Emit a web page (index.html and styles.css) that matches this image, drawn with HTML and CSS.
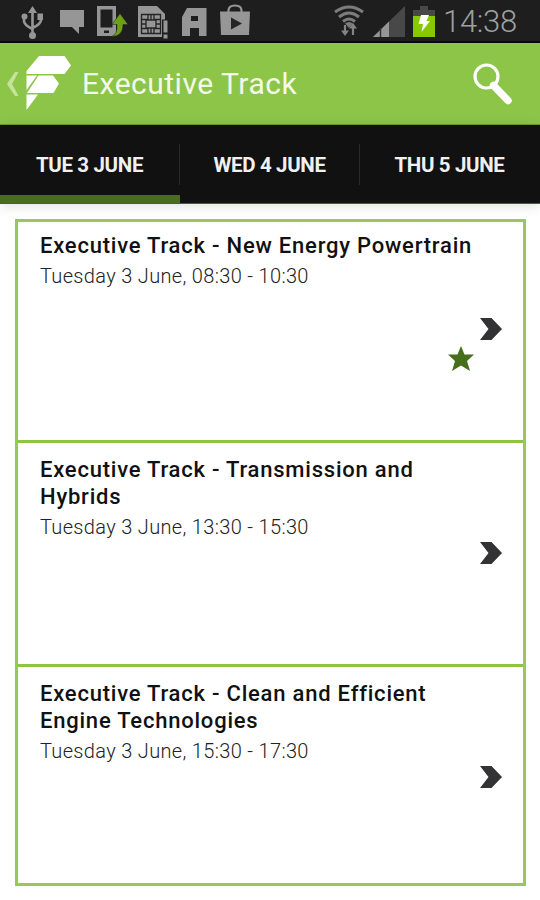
FILE: index.html
```html
<!DOCTYPE html>
<html lang="en">

<head>
    <meta charset="UTF-8">
    <meta name="viewport" content="width=device-width, initial-scale=1.0">
    <title>Executive Track</title>
    <link rel="stylesheet" href="styles.css">
</head>

<body>
    <div class="status-bar">
        <div class="status-icons">
            <!-- usb -->
            <svg width="24" height="36" viewBox="0 0 24 36">
                <path d="M11.500 4v26M3 13v4q0 4 8.500 8M20 12v4q0 4-8.500 8" fill="none" stroke="#969696" stroke-width="2.600" />
                <path d="M11.500 2l4.500 7H7z" fill="#969696" />
                <circle cx="3.500" cy="12.500" r="3" fill="#969696" />
                <path d="M16.500 9.500H22V16h-5.500z" fill="#969696" />
                <circle cx="11.500" cy="31.500" r="3.500" fill="#969696" />
            </svg>
            <!-- message -->
            <svg width="24" height="34" viewBox="0 0 24 34">
                <path d="M0 6h24v17h-5v7l-7-7H0z" fill="#969696" />
            </svg>
            <!-- phone with arrow -->
            <svg width="32" height="34" viewBox="0 0 32 34">
                <path d="M1 2h19v30H1zM4.500 5.500v18h12v-18zM8 26.500v2.500h5v-2.500z" fill="#969696" fill-rule="evenodd" />
                <path d="M15.500 32.500q6-1.500 5.500-12h-5l8-11 8 11h-5q0 12-11.500 12z" fill="#6f9f12" stroke="#1e1e1e" stroke-width=".5" />
            </svg>
            <!-- sim card -->
            <svg width="31" height="35" viewBox="0 0 31 35">
                <path d="M0 2h19l8 8v23H0z" fill="#969696" />
                <path d="M3.500 10.500h19v19h-19zM10 10.500v5H3.500M16 10.500v5h6.500M3.500 20H8M18 20h4.500M3.500 24.500H10v5M22.500 24.500H16v5M8 16h10v8H8zM13 10.500V16M13 24v5.500" fill="none" stroke="#242424" stroke-width="1.300" />
                <path d="M24 15.500h7V35h-7z" fill="#1e1e1e" />
                <path d="M25.500 16.500h4v12h-4zM25.500 30.500h4v4h-4z" fill="#969696" />
            </svg>
            <!-- app badge -->
            <svg width="25" height="34" viewBox="0 0 25 34">
                <path d="M0 13L5 4h19.500v28H17v-8H8v8H0zM9 12v5h7v-5z" fill="#969696" fill-rule="evenodd" />
            </svg>
            <!-- play store -->
            <svg width="30" height="34" viewBox="0 0 30 34">
                <path d="M8.500 8V6.500q0-5 6.500-5t6.500 5V8" fill="none" stroke="#969696" stroke-width="2.200" />
                <path d="M0 7.500h30L29 31H1z" fill="#969696" />
                <path d="M11 13.500v12L22 19.500z" fill="#252525" />
            </svg>
        </div>
        <div class="status-info">
            <!-- wifi -->
            <svg class="wifi" width="30" height="34" viewBox="0 0 30 34">
                <g fill="none" stroke="#7c7c7c" stroke-width="3">
                    <path d="M1 8q14-10 28 0" />
                    <path d="M5 13q10-8 20 0" />
                    <path d="M9 17.500q6-5 12 0" />
                </g>
                <path d="M11 19.500q4-3 8 0L15 24z" fill="#7c7c7c" />
                <path d="M11 21v9M19 32V21" fill="none" stroke="#1e1e1e" stroke-width="4" />
                <path d="M11 21v8M19 31v-8" fill="none" stroke="#858585" stroke-width="2.200" />
                <path d="M7 26.500h8L11 32zM15 24.500h8L19 19z" fill="#858585" />
            </svg>
            <!-- signal -->
            <svg class="signal" width="32" height="34" viewBox="0 0 32 34">
                <path d="M32 2v31H0z" fill="#484848" />
                <path d="M16 17.500V33H0z" fill="#969696" />
                <path d="M7.500 24v9" stroke="#333" stroke-width="1.500" />
            </svg>
            <!-- battery -->
            <svg class="battery" width="22" height="34" viewBox="0 0 22 34">
                <path d="M7 2h8v4h7v7H0V6h7z" fill="#484848" />
                <path d="M0 12h22v21H0z" fill="#88c800" />
                <path d="M8 11h8l-2.500 6H17L8.500 28l1.500-8H5.500z" fill="#fff" />
            </svg>
            <span class="clock">14:38</span>
        </div>
    </div>

    <div class="header">
        <svg class="back" width="12" height="24" viewBox="0 0 12 24">
            <path d="M8 0h3.500L5 12l6.500 12H8L0 12z" fill="#c6e39c" />
        </svg>
        <svg class="logo" width="46" height="54" viewBox="0 0 46 54">
            <path d="M13 0h25.500L45 9.500 38.500 18H.500V15z" fill="#fff" />
            <path d="M.500 19.500H11L.500 34z" fill="#fff" />
            <path d="M12.500 19.500H27L33 27.500 27.500 37H1z" fill="#fff" />
            <path d="M.500 38.500H12L.500 54z" fill="#fff" />
        </svg>
        <h1>Executive Track</h1>
        <svg class="search" width="40" height="42" viewBox="0 0 40 42">
            <circle cx="13.500" cy="13.500" r="11.500" fill="none" stroke="#fff" stroke-width="3.200" />
            <path d="M20.500 22.500L35 37.500" stroke="#fff" stroke-width="7.500" stroke-linecap="round" />
        </svg>
    </div>

    <div class="tabs">
        <div class="tab active"><span>TUE 3 JUNE</span></div>
        <div class="tab"><span>WED 4 JUNE</span></div>
        <div class="tab"><span>THU 5 JUNE</span></div>
    </div>

    <div class="sessions">
        <div class="session">
            <h2>Executive Track - New Energy Powertrain</h2>
            <p>Tuesday 3 June, 08:30 - 10:30</p>
            <svg class="arrow" width="22" height="22" viewBox="0 0 22 22">
                <path d="M0 0h11.500L22 11 11.500 22H0l8.500-11z" fill="#333336" />
            </svg>
            <svg class="star" width="26" height="25" viewBox="0 0 26 25">
                <path d="M13 0l3.500 8.500H26l-7 6.500 3 10-9-5.500L4 25l3-10L0 8.500h9.500z" fill="#456f1b" />
            </svg>
        </div>
        <div class="session">
            <h2>Executive Track - Transmission and Hybrids</h2>
            <p>Tuesday 3 June, 13:30 - 15:30</p>
            <svg class="arrow" width="22" height="22" viewBox="0 0 22 22">
                <path d="M0 0h11.500L22 11 11.500 22H0l8.500-11z" fill="#333336" />
            </svg>
        </div>
        <div class="session">
            <h2>Executive Track - Clean and Efficient Engine Technologies</h2>
            <p>Tuesday 3 June, 15:30 - 17:30</p>
            <svg class="arrow" width="22" height="22" viewBox="0 0 22 22">
                <path d="M0 0h11.500L22 11 11.500 22H0l8.500-11z" fill="#333336" />
            </svg>
        </div>
    </div>
</body>

</html>
```
FILE: styles.css
```css
* {
    box-sizing: border-box;
}

body {
    margin: 0;
    height: 900px;
    overflow: hidden;
    font-family: Roboto, sans-serif;
    background-color: #fff;
}

h1,
h2,
p {
    margin: 0;
}

svg {
    display: block;
    flex-shrink: 0;
}

.status-bar {
    display: flex;
    justify-content: space-between;
    height: 43px;
    padding: 4px 23px 0 21px;
    background: #1e1e1e;
    border-bottom: 2px solid #080810;
}

.status-icons {
    display: flex;
    gap: 14px;
}

.status-icons svg:nth-child(2) {
    margin-left: 1px;
}

.status-icons svg:nth-child(3) {
    margin-left: -2px;
}

.status-icons svg:nth-child(4) {
    margin-left: -4px;
}

.status-icons svg:nth-child(5) {
    margin-left: -1px;
}

.status-icons svg:nth-child(6) {
    margin-left: -1px;
}

.status-info {
    display: flex;
}

.wifi {
    margin-right: 9px;
}

.signal {
    margin-right: 8px;
}

.battery {
    margin-right: 8px;
}

.clock {
    width: 74px;
    font-size: 31px;
    font-weight: 300;
    line-height: 36px;
    letter-spacing: -0.3px;
    white-space: nowrap;
    color: #a0a0a0;
}

.header {
    display: flex;
    align-items: center;
    height: 82px;
    padding: 0 27px 0 7px;
    background: #8dc549;
    border-bottom: 1px solid #6c9a36;
}

.logo {
    margin-left: 7px;
    margin-bottom: 1px;
}

.header h1 {
    flex: 1;
    margin-left: 10px;
    padding-top: 1px;
    font-size: 30px;
    font-weight: 400;
    line-height: 36px;
    letter-spacing: 0.5px;
    white-space: nowrap;
    color: #f3f9e9;
}

.tabs {
    display: flex;
    height: 79px;
    background: #111;
    border-bottom: 1px solid #45671a;
    box-shadow: 0 2px 12px rgba(0, 0, 0, 0.12);
}

.tab {
    flex: 1;
    display: flex;
    align-items: center;
    justify-content: center;
    padding: 2px 1px 0 0;
    font-size: 20.5px;
    font-weight: 700;
    letter-spacing: -0.35px;
    color: #f0f0f0;
    background: linear-gradient(#2a2a2a, #2a2a2a) right 19px / 1px 41px no-repeat;
}

.tab:last-child {
    background: none;
}

.tab.active {
    border-bottom: 8px solid #4a6c1f;
    padding-top: 10px;
}

.sessions {
    margin: 15px 14px 0 15px;
    height: 667px;
    border: 3px solid #96ca54;
}

.session {
    position: relative;
    height: 224px;
    padding: 13px 42px 0 22px;
    border-bottom: 3px solid #8dc540;
}

.session:last-child {
    border-bottom: none;
}

.session:first-child {
    height: 221px;
    padding-top: 10px;
}

.session h2 {
    font-size: 22px;
    font-weight: 500;
    line-height: 27px;
    letter-spacing: 0.78px;
    color: #111;
}

.session p {
    margin-top: 5px;
    font-size: 20px;
    font-weight: 300;
    line-height: 24px;
    letter-spacing: 0.33px;
    color: #222;
}

.arrow {
    position: absolute;
    right: 21px;
    top: 99px;
}

.session:first-child .arrow {
    top: 96px;
}

.star {
    position: absolute;
    right: 49px;
    top: 124px;
}
```
